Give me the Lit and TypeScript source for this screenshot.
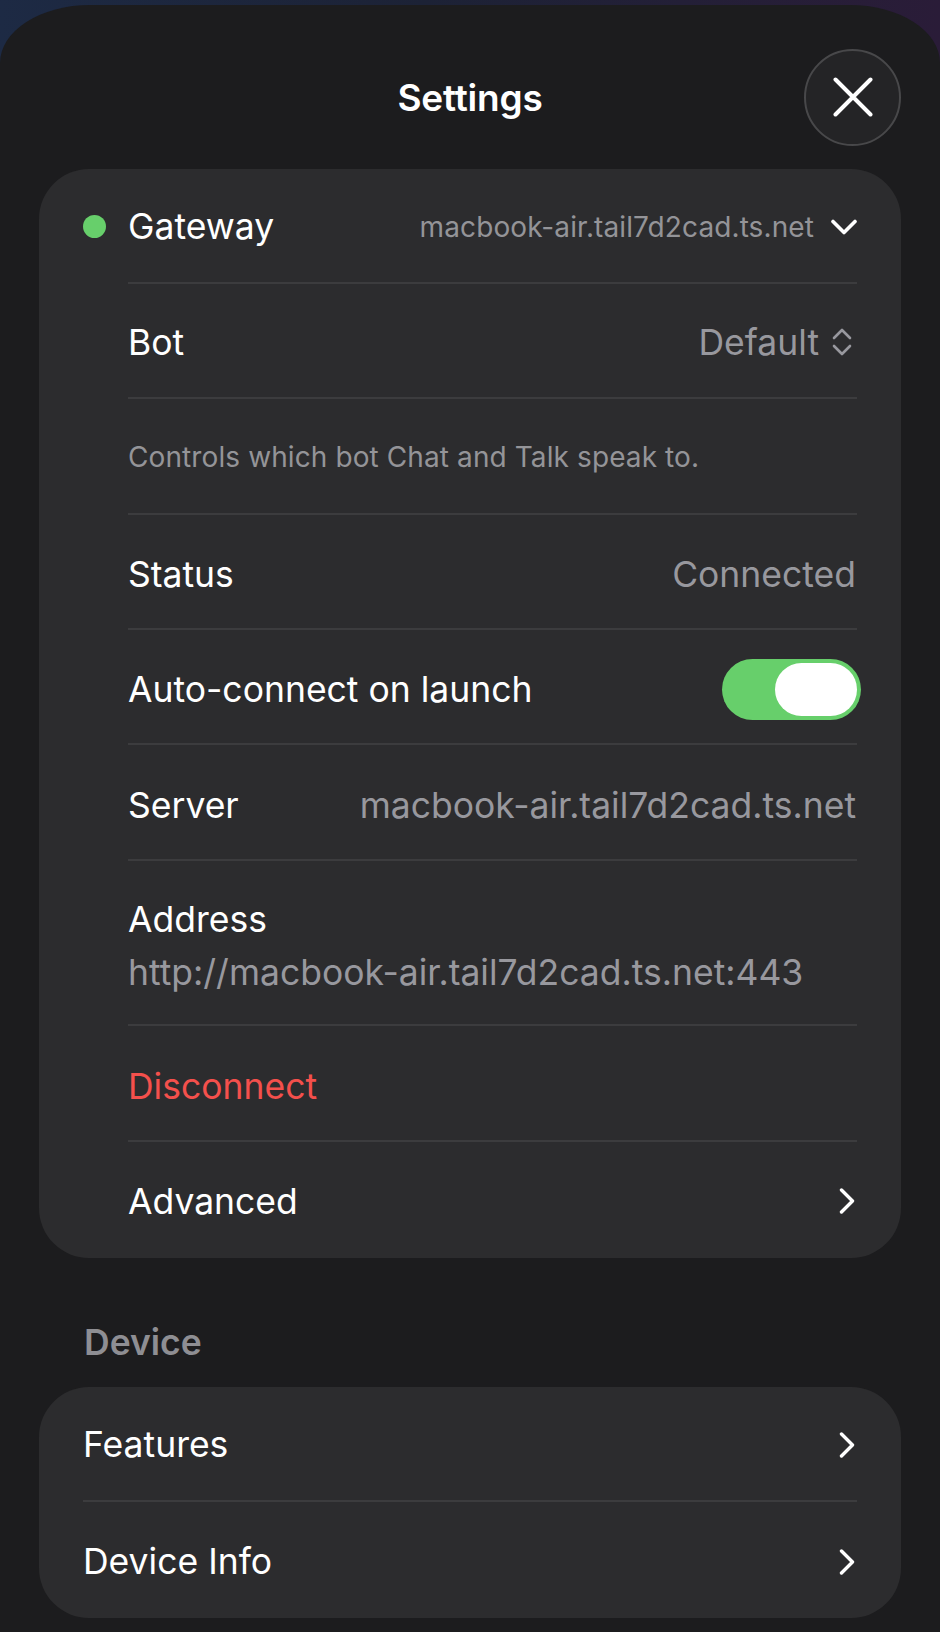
import { LitElement, html, css, svg } from "lit";
import { customElement } from "lit/decorators.js";

const chevronRight = html`<svg class="chev-right" viewBox="0 0 16 26" width="16" height="26" fill="none" stroke="#fff" stroke-width="3.4" stroke-linecap="round" stroke-linejoin="round"><path d="M2.5 2 L13.5 13 L2.5 24"/></svg>`;

@customElement("app-root")
export class AppRoot extends LitElement {
  static styles = css`
    :host {
      display: block;
      width: 940px;
      height: 1632px;
      overflow: hidden;
      background: linear-gradient(90deg, #1d2a44 0%, #1c2236 45%, #2a1c38 100%);
      font-family: Inter, "Liberation Sans", sans-serif;
      color: #fff;
      font-size: 35.5px;
    }
    .sheet {
      margin-top: 4.5px;
      height: 1627.5px;
      box-sizing: border-box;
      padding: 0 39px;
      background: #1c1c1e;
      border-radius: 90px 90px 0 0 / 58px 58px 0 0;
    }
    .header {
      box-sizing: border-box;
      height: 164px;
      padding-top: 21px;
      display: grid;
      grid-template-columns: 1fr auto 1fr;
      align-items: center;
    }
    .title {
      grid-column: 2;
      font-size: 37px;
      font-weight: 600;
      letter-spacing: -0.2px;
    }
    .close {
      grid-column: 3;
      justify-self: end;
      width: 97px;
      height: 97px;
      box-sizing: border-box;
      border-radius: 50%;
      background: #242426;
      border: 2px solid #48484a;
      display: flex;
      align-items: center;
      justify-content: center;
    }
    .card {
      background: #2c2c2e;
      border-radius: 50px;
      padding: 0 44px;
    }
    .row {
      box-sizing: border-box;
      height: 113.4px;
      padding-top: 3px;
      display: flex;
      align-items: center;
      justify-content: space-between;
      position: relative;
    }
    .row:last-child {
      height: 116px;
    }
    .row.mid {
      padding-top: 6px;
    }
    .inset {
      padding-left: 45px;
    }
    .sep {
      height: 2px;
      background: #3c3c3e;
    }
    .sep.inset-sep {
      margin-left: 45px;
    }
    .dot {
      position: absolute;
      left: 0;
      top: 46px;
      width: 23px;
      height: 23px;
      border-radius: 50%;
      background: #67cf6b;
    }
    .value {
      color: #98989e;
      display: flex;
      align-items: center;
      margin-right: 1px;
    }
    .small {
      font-size: 28px;
      letter-spacing: 0.1px;
      gap: 17px;
      color: #949498;
      margin-right: 0;
    }
    .note {
      font-size: 28px;
      letter-spacing: 0.1px;
      color: #949498;
    }
    .picker {
      gap: 13px;
    }
    .updown {
      margin-right: 4px;
    }
    .toggle {
      box-sizing: border-box;
      width: 139px;
      height: 61px;
      margin-right: -4px;
      border-radius: 31px;
      background: #67cf6b;
      padding: 4px;
      display: flex;
      justify-content: flex-end;
    }
    .knob {
      width: 82px;
      height: 53px;
      border-radius: 27px;
      background: #fff;
    }
    .tall {
      height: 163.5px;
      flex-direction: column;
      align-items: flex-start;
      justify-content: center;
      gap: 10px;
    }
    .danger {
      color: #f4504c;
    }
    .chev-right {
      margin-right: 2px;
    }
    .section {
      font-size: 35.5px;
      font-weight: 600;
      color: #8e8e93;
      height: 129px;
      box-sizing: border-box;
      padding: 65px 0 0 45px;
      line-height: 40px;
    }
  `;

  render() {
    return html`
      <div class="sheet">
        <div class="header">
          <div class="title">Settings</div>
          <div class="close">
            <svg width="40" height="40" viewBox="0 0 40 40" fill="none" stroke="#fff" stroke-width="4" stroke-linecap="round">
              ${svg`<path d="M2.5 2.5 L37.5 37.5 M37.5 2.5 L2.5 37.5"/>`}
            </svg>
          </div>
        </div>

        <div class="card">
          <div class="row inset">
            <span class="dot"></span>
            <span>Gateway</span>
            <span class="value small">
              macbook-air.tail7d2cad.ts.net
              <svg width="26" height="16" viewBox="0 0 26 16" fill="none" stroke="#fff" stroke-width="3.6" stroke-linecap="round" stroke-linejoin="round"><path d="M2 2.5 L13 13.5 L24 2.5"/></svg>
            </span>
          </div>
          <div class="sep inset-sep"></div>
          <div class="row inset">
            <span>Bot</span>
            <span class="value picker">
              Default
              <svg class="updown" width="20" height="28" viewBox="0 0 20 28" fill="none" stroke="#98989e" stroke-width="2.6" stroke-linecap="round" stroke-linejoin="round"><path d="M2 10 L10 2 L18 10 M2 18 L10 26 L18 18"/></svg>
            </span>
          </div>
          <div class="sep inset-sep"></div>
          <div class="row inset"><span class="note">Controls which bot Chat and Talk speak to.</span></div>
          <div class="sep inset-sep"></div>
          <div class="row inset mid"><span>Status</span><span class="value">Connected</span></div>
          <div class="sep inset-sep"></div>
          <div class="row inset mid">
            <span>Auto-connect on launch</span>
            <span class="toggle"><span class="knob"></span></span>
          </div>
          <div class="sep inset-sep"></div>
          <div class="row inset mid"><span>Server</span><span class="value">macbook-air.tail7d2cad.ts.net</span></div>
          <div class="sep inset-sep"></div>
          <div class="row inset tall mid">
            <span>Address</span>
            <span class="value">http://macbook-air.tail7d2cad.ts.net:443</span>
          </div>
          <div class="sep inset-sep"></div>
          <div class="row inset mid"><span class="danger">Disconnect</span></div>
          <div class="sep inset-sep"></div>
          <div class="row inset"><span>Advanced</span>${chevronRight}</div>
        </div>

        <div class="section">Device</div>

        <div class="card">
          <div class="row"><span>Features</span>${chevronRight}</div>
          <div class="sep"></div>
          <div class="row"><span>Device Info</span>${chevronRight}</div>
        </div>
      </div>
    `;
  }
}
